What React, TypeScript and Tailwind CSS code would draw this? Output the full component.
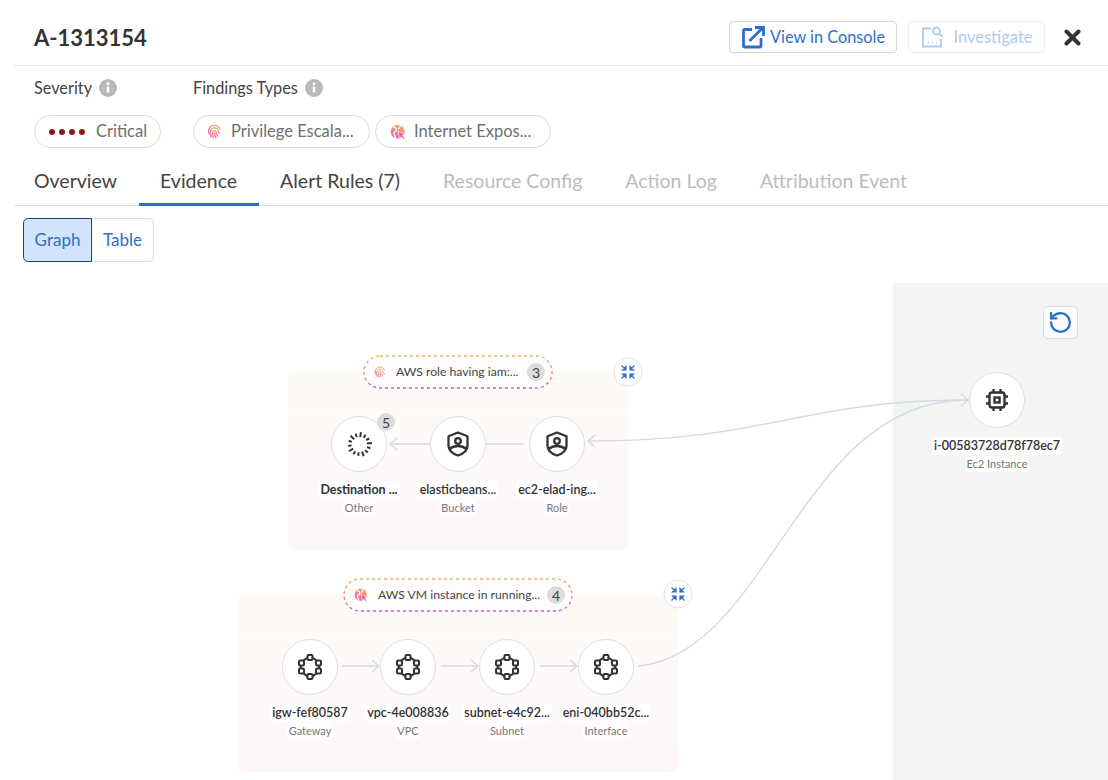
import React from "react";
import { RotateCcw } from "lucide-react";

// canvas starts at y=283 of the page, all node positions below are canvas coords
const tabs = [
  { label: "Overview", muted: false, first: true },
  { label: "Evidence", muted: false, active: true },
  { label: "Alert Rules (7)", muted: false },
  { label: "Resource Config", muted: true },
  { label: "Action Log", muted: true },
  { label: "Attribution Event", muted: true },
];

type NodeKind = "spinner" | "shield" | "network" | "chip";

const nodes: { x: number; y: number; title: string; sub: string; kind: NodeKind; bold?: boolean; badge?: string }[] = [
  { x: 359, y: 161, title: "Destination ...", sub: "Other", kind: "spinner", bold: true, badge: "5" },
  { x: 458, y: 161, title: "elasticbeans...", sub: "Bucket", kind: "shield" },
  { x: 557, y: 161, title: "ec2-elad-ing...", sub: "Role", kind: "shield" },
  { x: 310, y: 384, title: "igw-fef80587", sub: "Gateway", kind: "network" },
  { x: 408, y: 384, title: "vpc-4e008836", sub: "VPC", kind: "network" },
  { x: 507, y: 384, title: "subnet-e4c92...", sub: "Subnet", kind: "network" },
  { x: 606, y: 384, title: "eni-040bb52c...", sub: "Interface", kind: "network" },
  { x: 997, y: 117, title: "i-00583728d78f78ec7", sub: "Ec2 Instance", kind: "chip" },
];

const groups = [
  { x: 288, y: 89, w: 340, h: 178 },
  { x: 238, y: 312, w: 440, h: 177 },
];

const pills = [
  { x: 363, y: 72, w: 190, h: 34, text: "AWS role having iam:...", count: "3", icon: "finger" },
  { x: 343, y: 295, w: 230, h: 34, text: "AWS VM instance in running...", count: "4", icon: "globe" },
];

const collapses = [
  { x: 628, y: 89 },
  { x: 678, y: 311 },
];

function FingerprintIcon({ size = 16 }: { size?: number }) {
  return (
    <svg width={size} height={size} viewBox="0 0 24 24" fill="none" stroke="url(#warmGrad)" strokeWidth="2" strokeLinecap="round">
      <path d="M3.500 16C2 13 2 10.500 3 8 4.500 4.500 8 2 12 2s7.500 2.500 9 6" />
      <path d="M6.500 20.500C5 17 5 14 5.500 11.500 6.500 8 9 6.200 12 6.200c3.500 0 6 2.500 6 6 0 1.500 .8 2.800 3 2.800" />
      <path d="M10 22C8.500 18.500 8.500 15.500 9 13c.5-1.800 1.500-2.800 3-2.800s2.500 1 2.500 2.800c0 2.500 1.200 5 3.500 6.500" />
      <path d="M12 14c0 3 .8 5.800 2.500 8" />
    </svg>
  );
}

function GlobeIcon({ size = 16 }: { size?: number }) {
  return (
    <svg width={size} height={size} viewBox="0 0 24 24" fill="none">
      <circle cx="11.500" cy="11.500" r="10.500" fill="url(#warmGrad)" />
      <path d="M5 4c3 1 5 3 5 5s-4 2-4 5 2 5 3 7" stroke="#fff" strokeWidth="2" />
      <path d="M16 2c-1 3-3 4-3 6" stroke="#fff" strokeWidth="2" />
      <path d="M12 11l11 4-4.500 2 3.500 4-2 2-3.500-4-2 3.500z" fill="#e85fa8" stroke="#fff" strokeWidth="1" />
    </svg>
  );
}

function NodeIcon({ kind }: { kind: NodeKind }) {
  if (kind === "spinner") {
    const ticks = Array.from({ length: 14 }, (_, i) => (i * 360) / 14);
    return (
      <svg width="27" height="27" viewBox="0 0 27 27" stroke="#333" strokeWidth="2">
        {ticks.map((a, i) => (
          <line key={a} x1="13.500" y1={i % 3 === 0 ? 1 : 2} x2="13.500" y2={i % 3 === 0 ? 6 : 5.500} transform={`rotate(${a + 6} 13.500 13.500)`} />
        ))}
      </svg>
    );
  }
  if (kind === "shield") {
    return (
      <svg width="24" height="26" viewBox="0 0 24 26" fill="none" stroke="#333" strokeWidth="2.300" strokeLinejoin="round">
        <path d="M12 1.500l9.500 3.700v9.300c0 5-4 8.200-9.500 10-5.500-1.800-9.500-5-9.500-10V5.200z" />
        <circle cx="12" cy="10" r="2.800" />
        <path d="M3.500 18c2.500-2 5.500-3 8.500-3s6 1 8.500 3" />
      </svg>
    );
  }
  if (kind === "network") {
    const spots = [
      [13, 3.500],
      [21.500, 9],
      [21.500, 17],
      [13, 22.500],
      [4.500, 17],
      [4.500, 9],
    ];
    return (
      <svg width="26" height="26" viewBox="0 0 26 26" fill="none" stroke="#333" strokeWidth="2.100">
        <circle cx="13" cy="13" r="9.300" />
        {spots.map(([x, y]) => (
          <rect key={`${x}-${y}`} x={x - 2.500} y={y - 2.500} width="5" height="5" rx="1.200" fill="#fff" />
        ))}
      </svg>
    );
  }
  return (
    <svg width="24" height="24" viewBox="0 0 24 24" fill="none" stroke="#333" strokeWidth="2.400">
      <rect x="4.500" y="4.500" width="15" height="15" rx="2.500" />
      <rect x="9.500" y="9.500" width="5" height="5" />
      <path d="M8.500 1v3M15.500 1v3M8.500 20v3M15.500 20v3M1 8.500h3M1 15.500h3M20 8.500h3M20 15.500h3" />
    </svg>
  );
}

function CollapseIcon() {
  return (
    <svg width="15" height="15" viewBox="0 0 15 15" fill="#2d6fcb" stroke="#2d6fcb" strokeWidth="1.200">
      <path d="M1 1l4 4M5.500 2v3.500H2z" />
      <path d="M14 1l-4 4M9.500 2v3.500H13z" />
      <path d="M1 14l4-4M5.500 13V9.500H2z" />
      <path d="M14 14l-4-4M9.500 13V9.500H13z" />
    </svg>
  );
}

function InfoDot() {
  return (
    <svg width="18" height="18" viewBox="0 0 18 18" className="ml-[7px]">
      <circle cx="9" cy="9" r="9" fill="#b9b9b9" />
      <path d="M9 7.500v6" stroke="#fff" strokeWidth="2.600" />
      <circle cx="9" cy="4.700" r="1.500" fill="#fff" />
    </svg>
  );
}

function Chip({ children, className }: { children: React.ReactNode; className: string }) {
  return (
    <div className={`flex h-[33px] items-center rounded-full border border-[#dcdcdc] text-[16.500px] text-[#6f6f6f] ${className}`}>
      {children}
    </div>
  );
}

function GraphCanvas() {
  return (
    <div className="relative mt-[21px] flex min-h-0 flex-1 justify-end overflow-hidden">
      <div className="h-full w-[215px] bg-[#f3f5f5]" />

      {groups.map((g) => (
        <div
          key={g.x}
          className="absolute rounded-[6px] bg-gradient-to-b from-[#fefbf6] to-[#fdf7fb]"
          style={{ left: g.x, top: g.y, width: g.w, height: g.h }}
        />
      ))}

      <svg className="absolute inset-0" width="1108" height="497" fill="none" stroke="#d6d9e0" strokeWidth="1.400">
        <path d="M969 117C800 117 770 158 589 158" />
        <path d="M638 383C770 370 800 117 967 117" />
        <path d="M595 152l-7 6 7 6M961 111l7 6-7 6" />
        <path d="M430 161H391M397 155l-7 6 7 6M486 161h38" />
        <path d="M342 383h36M372 377l7 6-7 6M441 383h36M471 377l7 6-7 6M540 383h36M570 377l7 6-7 6" />
      </svg>

      {pills.map((p) => (
        <div
          key={p.x}
          className="absolute flex items-center rounded-full bg-[#fffdfc] pl-[11px] pr-[8px] text-[12.200px] text-[#444]"
          style={{ left: p.x, top: p.y, width: p.w, height: p.h }}
        >
          <svg className="absolute left-0 top-0" width={p.w} height={p.h} fill="none">
            <rect x="1" y="1" width={p.w - 2} height={p.h - 2} rx={(p.h - 2) / 2} stroke="url(#dashGrad)" strokeWidth="1.300" strokeDasharray="3 3" />
          </svg>
          {p.icon === "finger" ? <FingerprintIcon size={12} /> : <GlobeIcon size={14} />}
          <span className="ml-[10px] flex-1 whitespace-nowrap">{p.text}</span>
          <span className="flex h-[18px] w-[18px] items-center justify-center rounded-full bg-[#dcdcdc] text-[14px] text-[#444]">
            {p.count}
          </span>
        </div>
      ))}

      {collapses.map((c) => (
        <div
          key={c.x}
          className="absolute flex h-[29px] w-[29px] -translate-x-1/2 -translate-y-1/2 items-center justify-center rounded-full border border-[#e2e2e2] bg-white"
          style={{ left: c.x, top: c.y }}
        >
          <CollapseIcon />
        </div>
      ))}

      {nodes.map((n) => (
        <div key={n.title} className="absolute flex w-[140px] -translate-x-1/2 flex-col items-center" style={{ left: n.x, top: n.y - 28 }}>
          <div className="relative flex h-[56px] w-[56px] items-center justify-center rounded-full border border-[#dedede] bg-white">
            <NodeIcon kind={n.kind} />
            {n.badge && (
              <span className="absolute left-[45px] top-[-4px] flex h-[18px] w-[18px] items-center justify-center rounded-full bg-[#dcdcdc] text-[14px] text-[#444]">
                {n.badge}
              </span>
            )}
          </div>
          <span className={`mt-[9px] rounded-[2px] bg-white/70 px-[2px] text-[12.500px] leading-[18px] text-[#333] ${n.bold ? "font-bold" : "font-semibold"}`}>
            {n.title}
          </span>
          <span className="mt-[1px] rounded-[2px] bg-white/70 px-[2px] text-[11px] leading-[16px] text-[#777]">{n.sub}</span>
        </div>
      ))}

      <button className="absolute left-[1043px] top-[23px] flex h-[33px] w-[35px] items-center justify-center rounded-[5px] border border-[#dcdcdc] bg-white/60">
        <RotateCcw size={25} stroke="#2d6fcb" strokeWidth={2.200} />
      </button>
    </div>
  );
}

export default function App() {
  return (
    <div className="flex h-[780px] w-[1108px] flex-col overflow-hidden bg-white font-[family-name:Lato,sans-serif] text-[#333]">
      <svg width="0" height="0" className="absolute">
        <defs>
          <linearGradient id="warmGrad" x1="0.700" y1="0" x2="0.300" y2="1">
            <stop offset="0" stopColor="#edb26a" />
            <stop offset="1" stopColor="#e85fb8" />
          </linearGradient>
          <linearGradient id="dashGrad" x1="0" y1="0" x2="0" y2="1">
            <stop offset="0" stopColor="#efb66c" />
            <stop offset="1" stopColor="#e84fb5" />
          </linearGradient>
        </defs>
      </svg>

      {/* header */}
      <div className="ml-[14px] flex h-[66px] shrink-0 items-center border-b border-[#e8e8e8] pl-[20px] pt-[9px]">
        <h1 className="text-[22px] font-bold text-[#333]">A-1313154</h1>
        <button className="ml-auto flex h-[32px] w-[168px] items-center justify-center rounded-[4px] border border-[#d4d4d4] text-[16.300px] text-[#2d6fcb]">
          <svg width="24" height="24" viewBox="0 0 24 24" fill="none" stroke="#2d6fcb" strokeWidth="2.800" className="mr-[5px]">
            <path d="M11 4.500H3.500a1 1 0 0 0-1 1V21a1 1 0 0 0 1 1H19a1 1 0 0 0 1-1v-8" />
            <path d="M8.500 16L21 3.500M14 2.500h8.500V11" />
          </svg>
          View in Console
        </button>
        <button className="ml-[11px] flex h-[32px] w-[137px] items-center justify-center rounded-[4px] border border-[#eeeeee] text-[16.500px] text-[#aecaee]">
          <svg width="26" height="26" viewBox="0 0 26 24" fill="none" stroke="#aecaee" strokeWidth="1.800" className="mr-[7px]">
            <path d="M11 3.500H3v18h18v-8" />
            <circle cx="16.500" cy="6" r="3.500" />
            <path d="M19 9l3.500 2.500" />
            <path d="M8 17.500h.8M12 17.500h.8M16 17.500h.8" />
          </svg>
          Investigate
        </button>
        <svg width="17" height="17" viewBox="0 0 17 17" stroke="#333" strokeWidth="4" strokeLinecap="round" className="ml-[19px] mr-[27px]">
          <path d="M2.500 2.500l12 12M14.500 2.500l-12 12" />
        </svg>
      </div>

      {/* severity + findings */}
      <div className="flex shrink-0 pl-[34px] pt-[12px]">
        <div className="w-[159px]">
          <div className="flex h-[20px] items-center text-[16.300px] text-[#444]">
            Severity
            <InfoDot />
          </div>
          <Chip className="mt-[17px] w-[127px] pl-[14px]">
            <span className="mr-[11px] flex gap-[4px]">
              {[0, 1, 2, 3].map((i) => (
                <span key={i} className="h-[6px] w-[6px] rounded-full bg-[#8b1a1a]" />
              ))}
            </span>
            Critical
          </Chip>
        </div>
        <div>
          <div className="flex h-[20px] items-center text-[16.300px] text-[#444]">
            Findings Types
            <InfoDot />
          </div>
          <div className="mt-[17px] flex gap-[5px]">
            <Chip className="w-[177px] pl-[13px]">
              <FingerprintIcon size={15} />
              <span className="ml-[9px]">Privilege Escala...</span>
            </Chip>
            <Chip className="w-[176px] pl-[14px]">
              <GlobeIcon size={16} />
              <span className="ml-[8px]">Internet Expos...</span>
            </Chip>
          </div>
        </div>
      </div>

      {/* tabs */}
      <div className="ml-[14px] mt-[7px] flex h-[51px] shrink-0 items-stretch border-b border-[#dedede]">
        {tabs.map((t) => (
          <div
            key={t.label}
            className={`relative flex items-center pr-[21.500px] pt-[1px] text-[19.500px] ${t.first ? "pl-[20px]" : "pl-[21.500px]"} ${t.muted ? "text-[#bcbcbc]" : "text-[#444]"}`}
          >
            {t.label}
            {t.active && <span className="absolute bottom-[-1px] left-0 right-0 h-[3px] bg-[#2d6fcb]" />}
          </div>
        ))}
      </div>

      {/* graph / table toggle */}
      <div className="ml-[23px] mt-[12px] flex h-[44px] shrink-0 text-[17px] text-[#2d6fcb]">
        <button className="w-[69px] rounded-l-[5px] border border-[#1c4a87] bg-[#d2e4f9]">Graph</button>
        <button className="w-[62px] rounded-r-[5px] border border-l-0 border-[#dcdcdc]">Table</button>
      </div>

      <GraphCanvas />
    </div>
  );
}
